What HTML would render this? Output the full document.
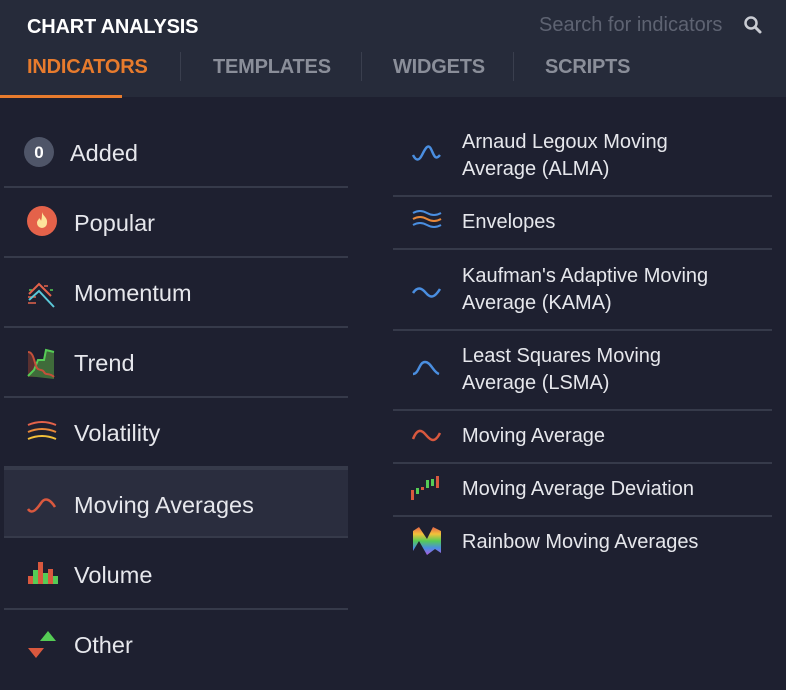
<!DOCTYPE html><html><head><style>
body{margin:0;width:786px;height:690px;background:#1e2030;font-family:"Liberation Sans",sans-serif;overflow:hidden;position:relative;color:#e6e7ec}
.hd{position:absolute;left:0;top:0;width:786px;height:97px;background:#262b3a}
.t{position:absolute;left:27px;top:16px;font-size:20px;font-weight:bold;color:#fff;letter-spacing:-0.2px}
.s{position:absolute;left:539px;top:14px;font-size:20px;color:#5e6372}
.tab{position:absolute;top:56px;font-size:20px;font-weight:bold;color:#8a8e99;letter-spacing:-0.2px}
.sep{position:absolute;top:52px;width:1px;height:29px;background:#3a3f4e}
.ul{position:absolute;left:0;top:95px;width:122px;height:3px;background:#e77b2d}
.l{position:absolute;left:4px;width:344px;height:70px;font-size:23.5px;line-height:70px;border-bottom:2px solid #363a4a;box-sizing:border-box}
.l span{position:absolute;left:70px}
.l svg{position:absolute;left:22px;top:20px}
.r{position:absolute;left:393px;width:379px;font-size:20px;line-height:27px;border-bottom:2px solid #363a4a;box-sizing:border-box}
.r span{position:absolute;left:69px}
.r svg{position:absolute;left:18px}
</style></head><body>
<div class="hd"></div>
<div class="t">CHART ANALYSIS</div>
<div class="s">Search for indicators</div>
<svg style="position:absolute;left:743px;top:15px" width="20" height="20" viewBox="0 0 20 20"><circle cx="8" cy="8" r="5.5" fill="none" stroke="#c9ccd3" stroke-width="2.5"/><path d="M12 12l5 5" stroke="#c9ccd3" stroke-width="3" stroke-linecap="round"/></svg>
<div class="tab" style="left:27px;color:#e77b2d">INDICATORS</div>
<div class="sep" style="left:180px"></div>
<div class="tab" style="left:213px">TEMPLATES</div>
<div class="sep" style="left:361px"></div>
<div class="tab" style="left:393px">WIDGETS</div>
<div class="sep" style="left:513px"></div>
<div class="tab" style="left:545px">SCRIPTS</div>
<div class="ul"></div>

<div class="l" style="top:118px;height:70px"><svg width="32" height="32" style="top:18px;left:19px"><circle cx="16" cy="16" r="15" fill="#4f5568"/><text x="16" y="22" text-anchor="middle" font-size="17" font-weight="bold" fill="#fff" font-family="Liberation Sans">0</text></svg><span style="left:66px">Added</span></div>
<div class="l" style="top:188px"><svg width="32" height="32" style="top:17px"><circle cx="16" cy="16" r="15" fill="#e4624a"/><path d="M16 7c1 4 6 6 5 11a5 5 0 0 1-10 0c0-3 2-3 2-5 1 1 2 2 2 3 1-3 1-6 1-9z" fill="#fde49a"/></svg><span>Popular</span></div>
<div class="l" style="top:258px"><svg width="32" height="32" style="top:22px" viewBox="0 0 32 32"><path d="M2 17h8M2 23h8M18 6h4" stroke="#e4624a" stroke-width="1.5"/><path d="M3 10h3M24 10h3" stroke="#5c5" stroke-width="1.5"/><path d="M3 14l10-10 12 12" fill="none" stroke="#e4624a" stroke-width="2"/><path d="M3 20l10-9 15 16" fill="none" stroke="#5bc8d8" stroke-width="2"/></svg><span>Momentum</span></div>
<div class="l" style="top:328px"><svg width="32" height="32" viewBox="0 0 32 32"><path d="M2 4c5 0 6 8 8 14s6 2 8 6 5 0 10 5H2z" fill="#5a3030"/><path d="M2 28l6-6 4-10 6 0 2-10 8 2v27z" fill="#3f6b3a"/><path d="M2 28l6-6 4-10 6 0 2-10 8 2" fill="none" stroke="#5c5" stroke-width="2"/><path d="M2 4c5 0 6 8 8 14s6 2 8 6 5 0 10 5" fill="none" stroke="#c4503a" stroke-width="2"/></svg><span>Trend</span></div>
<div class="l" style="top:398px"><svg width="32" height="32" viewBox="0 0 32 32"><path d="M2 7q14-6 28 0" fill="none" stroke="#e4624a" stroke-width="2"/><path d="M2 14q14-6 28 0" fill="none" stroke="#e8883a" stroke-width="2"/><path d="M2 21q14-6 28 0" fill="none" stroke="#f3c13a" stroke-width="2"/></svg><span>Volatility</span></div>
<div class="l" style="top:468px;background:#2a2d3e;border-top:2px solid #363a4a"><svg width="32" height="32" viewBox="0 0 32 32"><path d="M2 19c4 6 9 0 13-6s9-4 14 4" fill="none" stroke="#d9583e" stroke-width="2.5"/></svg><span>Moving Averages</span></div>
<div class="l" style="top:540px"><svg width="32" height="32" viewBox="0 0 32 32"><rect x="2" y="16" width="5" height="8" fill="#d9583e"/><rect x="7" y="10" width="5" height="14" fill="#5c5"/><rect x="12" y="2" width="5" height="22" fill="#d9583e"/><rect x="17" y="13" width="5" height="11" fill="#5c5"/><rect x="22" y="9" width="5" height="15" fill="#d9583e"/><rect x="27" y="16" width="5" height="8" fill="#5c5"/></svg><span>Volume</span></div>
<div class="l" style="top:610px;border:none"><svg width="32" height="36" style="top:18px" viewBox="0 0 32 36"><path d="M14 13l8-10 8 10z" fill="#5c5"/><path d="M2 20l8 10 8-10z" fill="#d9583e"/></svg><span>Other</span></div>

<div class="r" style="top:116px;height:81px"><svg width="32" height="32" style="top:25px" viewBox="0 0 32 32"><path d="M2 14c3 6 6 6 9 0s6-12 9-6 4 12 9 6" fill="none" stroke="#4a8ee0" stroke-width="2.5"/></svg><span style="top:13px">Arnaud Legoux Moving<br>Average (ALMA)</span></div>
<div class="r" style="top:197px;height:53px"><svg width="32" height="32" style="top:10px" viewBox="0 0 32 32"><path d="M2 6q7-4 14 0t14 0M2 18q7-4 14 0t14 0" fill="none" stroke="#4a8ee0" stroke-width="2"/><path d="M2 12q7-4 14 0t14 0" fill="none" stroke="#e8883a" stroke-width="2"/></svg><span style="top:12px">Envelopes</span></div>
<div class="r" style="top:250px;height:81px"><svg width="32" height="32" style="top:25px" viewBox="0 0 32 32"><path d="M2 18c4-6 8-6 13 0s9 4 14-4" fill="none" stroke="#4a8ee0" stroke-width="2.5"/></svg><span style="top:13px">Kaufman's Adaptive Moving<br>Average (KAMA)</span></div>
<div class="r" style="top:331px;height:80px"><svg width="32" height="32" style="top:23px" viewBox="0 0 32 32"><path d="M2 20c6 0 6-12 12-12s8 10 14 12" fill="none" stroke="#4a8ee0" stroke-width="2.5"/></svg><span style="top:12px">Least Squares Moving<br>Average (LSMA)</span></div>
<div class="r" style="top:411px;height:53px"><svg width="32" height="32" style="top:10px" viewBox="0 0 32 32"><path d="M2 18c4-10 8-10 13-4s9 8 14-2" fill="none" stroke="#d9583e" stroke-width="2.5"/></svg><span style="top:12px">Moving Average</span></div>
<div class="r" style="top:464px;height:53px"><svg width="32" height="32" style="top:10px" viewBox="0 0 32 32"><rect x="0" y="16" width="3" height="10" fill="#d9583e"/><rect x="5" y="14" width="3" height="6" fill="#5c5"/><rect x="10" y="13" width="3" height="3" fill="#d9583e"/><rect x="15" y="6" width="3" height="8" fill="#5c5"/><rect x="20" y="5" width="3" height="7" fill="#5c5"/><rect x="25" y="2" width="3" height="12" fill="#d9583e"/></svg><span style="top:12px">Moving Average Deviation</span></div>
<div class="r" style="top:517px;height:53px;border:none"><svg width="32" height="32" style="top:8px" viewBox="0 0 32 32"><defs><linearGradient id="g" x1="0" y1="0" x2="0" y2="1"><stop offset="0" stop-color="#e4624a"/><stop offset=".25" stop-color="#f3c13a"/><stop offset=".5" stop-color="#5c5"/><stop offset=".75" stop-color="#4a8ee0"/><stop offset="1" stop-color="#b05ae0"/></linearGradient></defs><path d="M2 6l6-4 8 12 6-12 8 4v22l-6-4-8 6-8-14-6 10z" fill="url(#g)"/></svg><span style="top:12px">Rainbow Moving Averages</span></div>
</body></html>
